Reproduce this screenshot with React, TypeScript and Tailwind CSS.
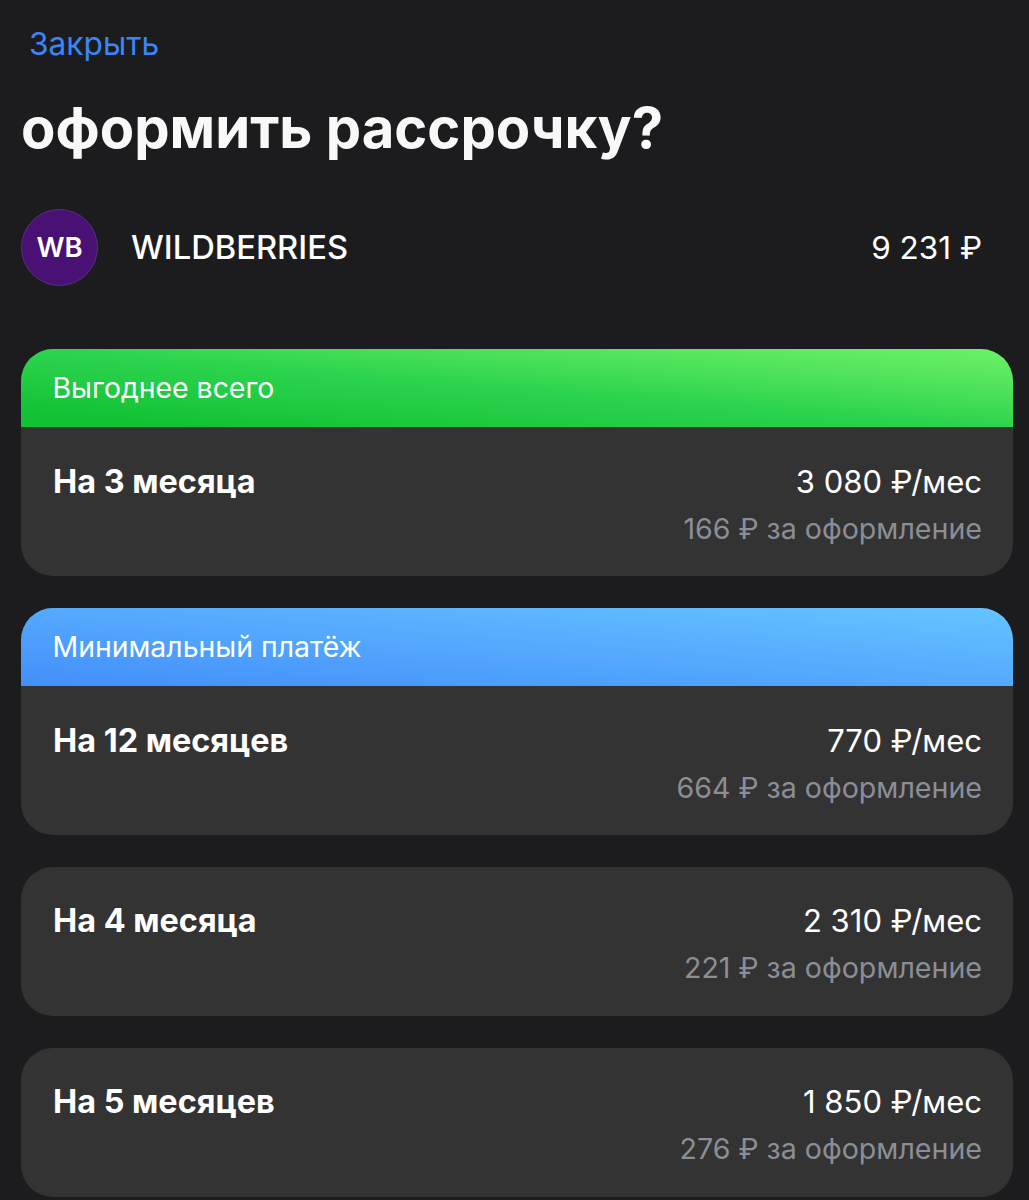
const font = "font-['Inter','Noto_Sans',sans-serif]";

type Plan = {
  title: string;
  price: string;
  fee: string;
  badge?: string;
  badgeClass?: string;
};

const plans: Plan[] = [
  {
    title: 'На 3 месяца',
    price: '3 080 ₽/мес',
    fee: '166 ₽ за оформление',
    badge: 'Выгоднее всего',
    badgeClass: 'bg-linear-to-tr from-[#12c235] from-10% via-[#2cd44e] to-[#6bf268]',
  },
  {
    title: 'На 12 месяцев',
    price: '770 ₽/мес',
    fee: '664 ₽ за оформление',
    badge: 'Минимальный платёж',
    badgeClass: 'bg-linear-to-tr from-[#438ffa] via-[#55a9fe] to-[#66c4ff]',
  },
  { title: 'На 4 месяца', price: '2 310 ₽/мес', fee: '221 ₽ за оформление' },
  { title: 'На 5 месяцев', price: '1 850 ₽/мес', fee: '276 ₽ за оформление' },
];

function PlanCard({ plan }: { plan: Plan }) {
  return (
    <div className="overflow-hidden rounded-[32px] bg-[#333333]">
      {plan.badge && (
        <div className={`flex h-[78px] items-center pt-px pl-[31.5px] text-[28.4px] text-white ${plan.badgeClass}`}>
          {plan.badge}
        </div>
      )}
      <div
        className={`flex h-[149px] items-start justify-between pr-[31px] pl-8 ${plan.badge ? 'pt-[33px]' : 'pt-[32px]'}`}
      >
        <span className="text-[32.4px] leading-[44px] font-bold text-white">{plan.title}</span>
        <div className="flex flex-col items-end">
          <span className="text-[31px] leading-[44px] text-white">{plan.price}</span>
          <span className="mt-[3px] text-[28.6px] leading-[44px] text-[#8b8e96]">{plan.fee}</span>
        </div>
      </div>
    </div>
  );
}

export default function App() {
  return (
    <div className={`h-[1200px] overflow-hidden bg-[#1c1c1e] px-[21px] ${font}`}>
      <div className="pt-[22px] pl-2 text-[31.7px] leading-[44px] text-[#3b86f7]">Закрыть</div>
      <h1 className="mt-[20px] text-[56.2px] leading-[84px] font-bold text-[#f8f8f9]">оформить рассрочку?</h1>
      <div className="mt-[39px] flex h-[77px] items-center justify-between pr-[26px]">
        <div className="flex items-center gap-[33px]">
          <div className="flex h-[77px] w-[77px] items-center justify-center rounded-full border border-[#5a2d8a] bg-[#481173] text-[27.5px] font-semibold text-white">
            WB
          </div>
          <span className="text-[32.7px] font-medium text-white">WILDBERRIES</span>
        </div>
        <span className="text-[31.5px] text-white">9 231 ₽</span>
      </div>
      <div className="mt-[63px] flex w-[992px] flex-col gap-8">
        {plans.map((plan) => (
          <PlanCard key={plan.title} plan={plan} />
        ))}
      </div>
    </div>
  );
}
